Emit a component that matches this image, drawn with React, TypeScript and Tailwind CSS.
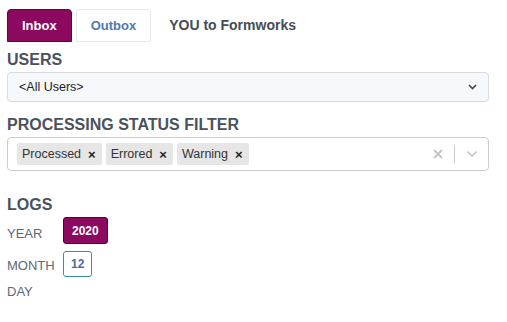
import React from "react";

function Tag({ label }: { label: string }) {
  return (
    <div className="flex h-[22px] items-center rounded-[2px] bg-[#e6e6e6] pl-[5px] pr-[6px] text-[12.5px] text-[#333333]">
      <span>{label}</span>
      <span className="ml-[7px] text-[13px] font-bold leading-none text-[#222]">×</span>
    </div>
  );
}

export default function App() {
  return (
    <div
      className="min-h-[322px] w-[507px] bg-white pl-[7px] pr-[18px] pt-[9px]"
      style={{ fontFamily: '"Liberation Sans", Arial, sans-serif' }}
    >
      {/* Tabs */}
      <div className="flex h-[33px] items-stretch gap-[4px] text-[13px] font-bold">
        <div className="flex items-center rounded-t-[4px] border border-[#5c0640] bg-[#8b0a5f] px-[14px] text-white">
          Inbox
        </div>
        <div className="flex items-center rounded-t-[3px] border border-[#e6e9ee] bg-white px-[14px] text-[#4d7ab0]">
          Outbox
        </div>
        <div className="flex items-center pl-[14px] text-[14px] text-[#454d57]">YOU to Formworks</div>
      </div>

      {/* Users */}
      <div className="mt-[8px] h-[20px] text-[16px] font-bold leading-[20px] text-[#4a525c]">USERS</div>
      <div className="mt-[2px] flex h-[30px] items-center justify-between rounded-[4px] border border-[#d6dbe1] bg-[#f5f9fc] pl-[11px] pr-[11px] text-[12.5px] text-[#222]">
        <span>&lt;All Users&gt;</span>
        <svg width="9" height="6" viewBox="0 0 9 6" fill="none">
          <path d="M1 1 L4.5 4.5 L8 1" stroke="#444" strokeWidth="1.6" />
        </svg>
      </div>

      {/* Processing status filter */}
      <div className="mt-[13px] h-[20px] text-[16px] font-bold leading-[20px] text-[#4a525c]">
        PROCESSING STATUS FILTER
      </div>
      <div className="mt-[2px] flex h-[34px] items-center rounded-[4px] border border-[#cccccc] bg-white pl-[9px]">
        <div className="flex flex-1 items-center gap-[4px]">
          <Tag label="Processed" />
          <Tag label="Errored" />
          <Tag label="Warning" />
        </div>
        <div className="flex items-center">
          <svg width="12" height="12" viewBox="0 0 12 12" className="mr-[10px]">
            <path d="M2 2 L10 10 M10 2 L2 10" stroke="#c4c4c4" strokeWidth="1.8" />
          </svg>
          <div className="h-[18px] w-px bg-[#cccccc]" />
          <div className="flex w-[33px] items-center justify-center">
            <svg width="12" height="8" viewBox="0 0 12 8" fill="none">
              <path d="M1.5 1.5 L6 6 L10.5 1.5" stroke="#c4c4c4" strokeWidth="1.6" />
            </svg>
          </div>
        </div>
      </div>

      {/* Logs */}
      <div className="mt-[24px] h-[20px] text-[16px] font-bold leading-[20px] text-[#4a525c]">LOGS</div>
      <div className="mt-[2px] flex h-[27px] items-center">
        <div className="w-[56px] pt-[6px] text-[13px] text-[#5d6878]">YEAR</div>
        <div className="flex h-[27px] items-center rounded-[3px] border border-[#4a0434] bg-[#8b0a5f] px-[8px] text-[12px] font-bold text-white">
          2020
        </div>
      </div>
      <div className="mt-[7px] flex h-[26px] items-center">
        <div className="w-[56px] pt-[4px] text-[13px] text-[#5d6878]">MONTH</div>
        <div className="flex h-[26px] items-center rounded-[3px] border border-[#3a8f9e] bg-white px-[7px] text-[12px] font-bold text-[#4a6e9c]">
          12
        </div>
      </div>
      <div className="mt-[5px] flex h-[20px] items-center">
        <div className="w-[56px] text-[13px] text-[#5d6878]">DAY</div>
      </div>
    </div>
  );
}
